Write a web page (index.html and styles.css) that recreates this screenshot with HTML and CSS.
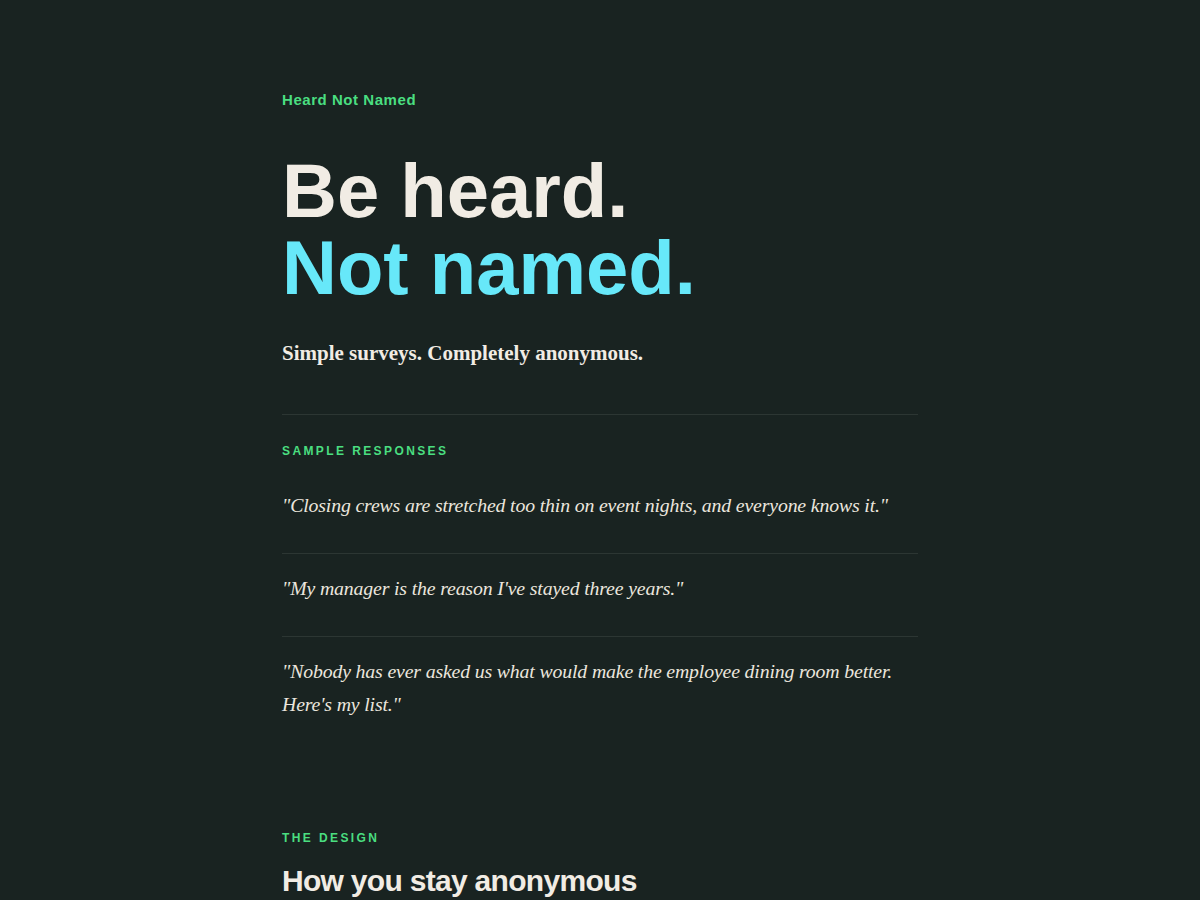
FILE: index.html
```html
<!DOCTYPE html>
<html lang="en">
<head>
<meta charset="utf-8">
<title>Heard Not Named</title>
<link rel="stylesheet" href="styles.css">
</head>
<body>
<main class="page">
  <div class="brand">Heard Not Named</div>
  <h1 class="hero">
    <span class="hero-line">Be heard.</span>
    <span class="hero-line accent">Not named.</span>
  </h1>
  <p class="tagline">Simple surveys. Completely anonymous.</p>

  <section class="responses">
    <div class="label">Sample Responses</div>
    <ul class="quotes">
      <li class="quote">"Closing crews are stretched too thin on event nights, and everyone knows it."</li>
      <li class="quote">"My manager is the reason I've stayed three years."</li>
      <li class="quote">"Nobody has ever asked us what would make the employee dining room better. Here's my list."</li>
    </ul>
  </section>

  <section class="design">
    <div class="label">The Design</div>
    <h2 class="section-title">How you stay anonymous</h2>
  </section>
</main>
</body>
</html>
```

FILE: styles.css
```css
html, body {
  margin: 0;
  padding: 0;
  background: #192321;
}
body {
  color: #f1ece4;
  font-family: "Liberation Sans", Arial, sans-serif;
  height: 900px;
  overflow: hidden;
}
.page {
  width: 636px;
  margin: 0 auto;
  padding-top: 90px;
}
.brand {
  font-family: "Liberation Sans", Arial, sans-serif;
  font-weight: 700;
  font-size: 15px;
  line-height: 20px;
  color: #4ade80;
  letter-spacing: 0.55px;
}
.hero {
  margin: 42px 0 0;
  font-family: "Liberation Sans", Arial, sans-serif;
  font-weight: 700;
  font-size: 76px;
  line-height: 77px;
  letter-spacing: 0;
}
.hero-line {
  display: block;
  color: #f1ece4;
}
.hero-line.accent {
  color: #67e8f9;
}
.tagline {
  margin: 32px 0 0;
  font-family: "Liberation Serif", "Times New Roman", serif;
  font-weight: 700;
  font-size: 21px;
  line-height: 30px;
  color: #f1ece4;
}
.responses {
  margin-top: 46px;
  border-top: 1px solid #2c3633;
  padding-top: 28px;
}
.label {
  font-family: "Liberation Sans", Arial, sans-serif;
  font-weight: 700;
  font-size: 12px;
  line-height: 16px;
  letter-spacing: 2.4px;
  text-transform: uppercase;
  color: #4ade80;
}
.quotes {
  list-style: none;
  margin: 0;
  padding: 0;
}
.quote {
  font-family: "Liberation Serif", "Times New Roman", serif;
  font-style: italic;
  font-size: 19.8px;
  letter-spacing: -0.15px;
  line-height: 33px;
  color: #ebe6de;
  padding: 17px 0 31px;
  border-bottom: 1px solid #2c3633;
}
.quotes .quote:first-child {
  padding-top: 30px;
}
.quotes .quote:nth-child(n+2) {
  padding-top: 18px;
}
.quotes .quote:last-child {
  border-bottom: none;
}
.design {
  margin-top: 78px;
}
.section-title {
  margin: 17px 0 0;
  font-family: "Liberation Sans", Arial, sans-serif;
  font-weight: 700;
  font-size: 30px;
  line-height: 36px;
  letter-spacing: -0.7px;
  color: #f1ece4;
}
```
